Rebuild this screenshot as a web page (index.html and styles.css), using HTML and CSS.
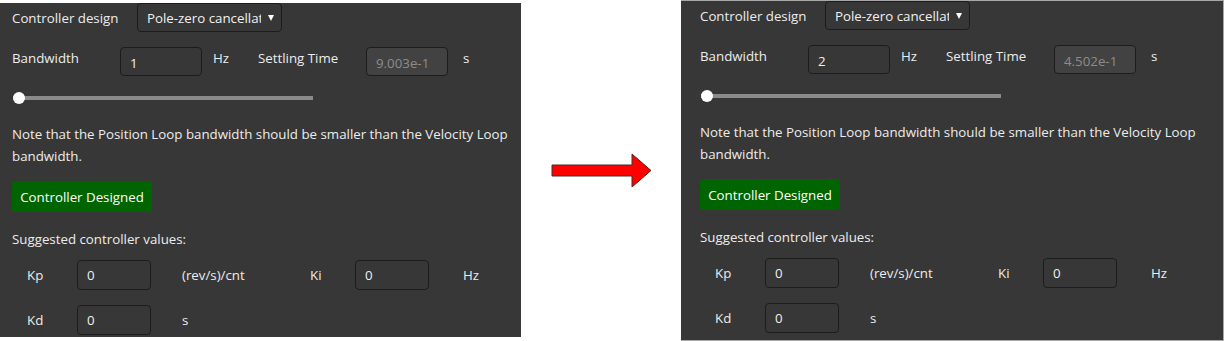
FILE: index.html
```html
<!DOCTYPE html>
<html lang="en">
<head>
    <meta charset="UTF-8">
    <meta name="viewport" content="width=device-width, initial-scale=1.0">
    <title>Position Loop Controller Design</title>
    <link rel="stylesheet" href="styles.css">
</head>
<body>

<div class="page">

    <!-- before: bandwidth 1 Hz -->
    <div class="panel panel-before">
        <div class="row row-design">
            <label class="lbl w-design">Controller design</label>
            <div class="select-wrap">
                <select class="select"><option>Pole-zero cancellation</option></select>
            </div>
        </div>
        <div class="row row-bw">
            <label class="lbl w-bw">Bandwidth</label>
            <input class="field field-bw" type="text" value="1">
            <span class="unit w-hz">Hz</span>
            <label class="lbl w-settle">Settling Time</label>
            <input class="field field-bw" type="text" placeholder="9.003e-1" disabled>
            <span class="unit">s</span>
        </div>
        <input class="slider" type="range" min="0" max="100" value="0">
        <p class="note">Note that the Position Loop bandwidth should be smaller than the Velocity Loop bandwidth.</p>
        <button class="btn-designed">Controller Designed</button>
        <p class="suggest">Suggested controller values:</p>
        <div class="row row-gain row-kp">
            <label class="lbl w-gain">Kp</label>
            <input class="field field-gain" type="text" value="0">
            <span class="unit w-kpunit">(rev/s)/cnt</span>
            <label class="lbl w-ki">Ki</label>
            <input class="field field-gain" type="text" value="0">
            <span class="unit w-kiunit">Hz</span>
        </div>
        <div class="row row-gain row-kd">
            <label class="lbl w-gain">Kd</label>
            <input class="field field-gain" type="text" value="0">
            <span class="unit w-kpunit">s</span>
        </div>
    </div>

    <div class="arrow-wrap">
        <svg class="arrow" width="101" height="35" viewBox="0 0 101 35">
            <polygon points="1,12 81,12 81,1 100,17.5 81,34 81,23 1,23" fill="#ff0000" stroke="#4a2a2a" stroke-width="1"/>
        </svg>
    </div>

    <!-- after: bandwidth 2 Hz -->
    <div class="panel panel-after">
        <div class="row row-design">
            <label class="lbl w-design">Controller design</label>
            <div class="select-wrap">
                <select class="select"><option>Pole-zero cancellation</option></select>
            </div>
        </div>
        <div class="row row-bw">
            <label class="lbl w-bw">Bandwidth</label>
            <input class="field field-bw" type="text" value="2">
            <span class="unit w-hz">Hz</span>
            <label class="lbl w-settle">Settling Time</label>
            <input class="field field-bw" type="text" placeholder="4.502e-1" disabled>
            <span class="unit">s</span>
        </div>
        <input class="slider" type="range" min="0" max="100" value="0">
        <p class="note">Note that the Position Loop bandwidth should be smaller than the Velocity Loop bandwidth.</p>
        <button class="btn-designed">Controller Designed</button>
        <p class="suggest">Suggested controller values:</p>
        <div class="row row-gain row-kp">
            <label class="lbl w-gain">Kp</label>
            <input class="field field-gain" type="text" value="0">
            <span class="unit w-kpunit">(rev/s)/cnt</span>
            <label class="lbl w-ki">Ki</label>
            <input class="field field-gain" type="text" value="0">
            <span class="unit w-kiunit">Hz</span>
        </div>
        <div class="row row-gain row-kd">
            <label class="lbl w-gain">Kd</label>
            <input class="field field-gain" type="text" value="0">
            <span class="unit w-kpunit">s</span>
        </div>
    </div>

</div>

</body>
</html>
```

FILE: styles.css
```css
body {
    margin: 0;
    background: #fff;
    font-family: 'Open Sans', 'Noto Sans', sans-serif;
    font-size: 13.3px;
    color: #ececec;
}

.page {
    display: flex;
    height: 341px;
}

.panel {
    background: #373737;
    box-sizing: border-box;
    display: flex;
    flex-direction: column;
    align-items: flex-start;
}

.panel-before {
    width: 521px;
    height: 334px;
    margin-top: 3px;
    padding-left: 12px;
}

.panel-after {
    width: 543px;
    height: 341px;
    padding-left: 19px;
    border-top: 1px solid #a8a8a8;
    border-right: 1px solid #a8a8a8;
    border-bottom: 1px solid #a8a8a8;
}

.arrow-wrap {
    flex: 1;
    display: flex;
    align-items: center;
    justify-content: center;
}

.arrow {
    display: block;
}

/* rows */
.row {
    display: flex;
    align-items: center;
    line-height: 22px;
}

.row-design {
    height: 29px;
}

.row-bw {
    margin-top: 15px;
    align-items: flex-start;
}

.row-kp {
    margin-top: 10px;
    padding-left: 15px;
}

.row-kd {
    margin-top: 15px;
    padding-left: 15px;
}

.lbl, .unit {
    white-space: nowrap;
}

.w-design { width: 125px; }
.w-bw { width: 108px; }
.w-hz { width: 45px; margin-left: 11px; }
.w-settle { width: 108px; }
.row-bw .unit:last-child { margin-left: 15px; }

.w-gain { width: 50px; }
.w-kpunit { width: 128px; margin-left: 31px; }
.w-ki { width: 45px; }
.w-kiunit { margin-left: 34px; }

/* select */
.select-wrap {
    position: relative;
}

.select {
    -webkit-appearance: none;
    appearance: none;
    width: 145px;
    height: 29px;
    box-sizing: border-box;
    padding: 0 20px 0 9px;
    background: #373737;
    color: #f0f0f0;
    border: 1px solid #1c1c1c;
    border-radius: 4px;
    font-family: inherit;
    font-size: 13.3px;
}

.select-wrap::after {
    content: "";
    position: absolute;
    right: 8px;
    top: 12px;
    border-left: 3px solid transparent;
    border-right: 3px solid transparent;
    border-top: 6px solid #fff;
}

/* inputs */
.field {
    box-sizing: border-box;
    height: 29px;
    padding: 3px 9px 0;
    background: #373737;
    color: #f0f0f0;
    border: 1px solid #1c1c1c;
    border-radius: 4px;
    font-family: inherit;
    font-size: 13.3px;
    outline: none;
}

.field-bw {
    width: 82px;
}

.field:disabled {
    background: #424242;
}

.field:disabled::placeholder {
    color: #8c8c8c;
}

.field-gain {
    width: 74px;
    height: 30px;
    padding-top: 0;
}

/* slider */
.slider {
    -webkit-appearance: none;
    appearance: none;
    width: 300px;
    height: 12px;
    margin: 16px 0 0 1px;
    background: transparent;
    display: block;
}

.slider::-webkit-slider-runnable-track {
    height: 4px;
    background: #8a8a8a;
}

.slider::-webkit-slider-thumb {
    -webkit-appearance: none;
    width: 12px;
    height: 12px;
    border-radius: 50%;
    background: #fff;
    margin-top: -4px;
}

.note {
    margin: 19px 0 0;
    max-width: 500px;
    line-height: 22px;
}

.btn-designed {
    margin: 14px 0 0;
    width: 140px;
    height: 31px;
    background: #006400;
    color: #fff;
    border: none;
    border-radius: 3px;
    font-family: inherit;
    font-size: 13.3px;
    padding: 0;
}

.suggest {
    margin: 16px 0 0;
    line-height: 22px;
}
```
